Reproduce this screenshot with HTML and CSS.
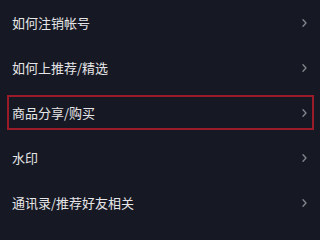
FILE: index.html
```html
<!DOCTYPE html>
<html lang="zh">
<head>
<meta charset="utf-8">
<link rel="stylesheet" href="styles.css">
</head>
<body>
<ul class="list">
  <li class="row"><span class="label">如何注销帐号</span><svg class="chev" viewBox="0 0 5 8" width="5" height="8"><polyline points="1,0.8 4,4 1,7.2"/></svg></li>
  <li class="row"><span class="label">如何上推荐/精选</span><svg class="chev" viewBox="0 0 5 8" width="5" height="8"><polyline points="1,0.8 4,4 1,7.2"/></svg></li>
  <li class="row highlight"><span class="label">商品分享/购买</span><svg class="chev" viewBox="0 0 5 8" width="5" height="8"><polyline points="1,0.8 4,4 1,7.2"/></svg></li>
  <li class="row"><span class="label">水印</span><svg class="chev" viewBox="0 0 5 8" width="5" height="8"><polyline points="1,0.8 4,4 1,7.2"/></svg></li>
  <li class="row"><span class="label">通讯录/推荐好友相关</span><svg class="chev" viewBox="0 0 5 8" width="5" height="8"><polyline points="1,0.8 4,4 1,7.2"/></svg></li>
</ul>
</body>
</html>
```
FILE: styles.css
```css
html, body {
  margin: 0;
  padding: 0;
  background: #161823;
  overflow: hidden;
}
.list {
  list-style: none;
  margin: 0;
  padding: 0;
  font-family: "Noto Sans CJK SC", "Noto Sans", sans-serif;
}
.row {
  position: relative;
  height: 45px;
  display: flex;
  align-items: center;
  justify-content: space-between;
  padding: 0 13px 0 12px;
  box-sizing: border-box;
}
.label {
  color: #e6e6e8;
  font-size: 13px;
  line-height: 16px;
}
.chev {
  display: block;
  fill: none;
  stroke: #85868d;
  stroke-width: 1.3;
  stroke-linecap: round;
  stroke-linejoin: round;
}
.highlight::after {
  content: "";
  position: absolute;
  left: 7px;
  right: 6px;
  top: 5px;
  bottom: 5px;
  border: 2px solid #9a1c29;
}
```
